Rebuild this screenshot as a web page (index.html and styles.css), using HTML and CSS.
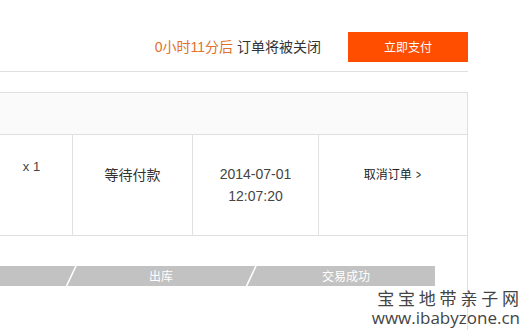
FILE: index.html
```html
<!DOCTYPE html>
<html lang="zh-CN">
<head>
<meta charset="utf-8">
<title>订单详情</title>
<link rel="stylesheet" href="styles.css">
</head>
<body>
<div class="page">
  <div class="topbar">
    <div class="timer"><span class="countdown">0小时11分后</span> 订单将被关闭</div>
    <a class="pay-btn">立即支付</a>
  </div>
  <div class="box">
    <div class="box-head"></div>
    <div class="row">
      <div class="cell cell-qty">x 1</div>
      <div class="cell cell-status">等待付款</div>
      <div class="cell cell-time">2014-07-01<br>12:07:20</div>
      <div class="cell cell-op">取消订单 <span class="arrow">&gt;</span></div>
    </div>
    <div class="progress">
      <div class="step step-first"></div>
      <svg class="sep" width="12" height="20" viewBox="0 0 12 20"><line x1="11" y1="0" x2="1.5" y2="20" stroke="#fff" stroke-width="1.6"/></svg>
      <div class="step step-mid">出库</div>
      <svg class="sep" width="12" height="20" viewBox="0 0 12 20"><line x1="11" y1="0" x2="1.5" y2="20" stroke="#fff" stroke-width="1.6"/></svg>
      <div class="step step-last">交易成功</div>
    </div>
  </div>
  <div class="watermark">
    <div class="wm-cn">宝宝地带亲子网</div>
    <div class="wm-url">www.ibabyzone.cn</div>
  </div>
</div>
</body>
</html>
```
FILE: styles.css
```css
html, body {
  margin: 0;
  padding: 0;
  background: #fff;
}
body {
  font-family: "Liberation Sans", "Noto Sans CJK SC", sans-serif;
  color: #333;
  width: 528px;
  height: 330px;
  overflow: hidden;
}
.page {
  width: 528px;
  height: 330px;
  position: relative;
  overflow: hidden;
}
.topbar {
  width: 468px;
  display: flex;
  justify-content: flex-end;
  align-items: center;
  gap: 27px;
  padding: 32px 0 9px;
  border-bottom: 1px solid #e0e0e0;
}
.timer {
  font-size: 14px;
  line-height: 20px;
  color: #333;
  font-family: "Liberation Sans", "Noto Sans CJK SC", sans-serif;
}
.countdown {
  color: #e2702c;
}
.pay-btn {
  display: block;
  width: 120px;
  height: 30px;
  line-height: 30px;
  text-align: center;
  background: #ff4e00;
  color: #fff;
  font-size: 12px;
  font-family: "Noto Sans CJK SC", sans-serif;
}
.box {
  margin-top: 20px;
  width: 468px;
  box-sizing: border-box;
  border-top: 1px solid #e0e0e0;
  border-right: 1px solid #e0e0e0;
  height: 238px;
}
.box-head {
  height: 41px;
  background: #fafafa;
  border-bottom: 1px solid #e0e0e0;
}
.row {
  display: flex;
  height: 100px;
  border-bottom: 1px solid #e0e0e0;
}
.cell {
  box-sizing: border-box;
  text-align: center;
  border-right: 1px solid #e0e0e0;
  line-height: 22px;
  font-size: 14px;
  color: #333;
}
.cell-qty {
  width: 73px;
  font-size: 13px;
  padding-top: 21px;
  padding-right: 9px;
  color: #444;
}
.cell-status {
  width: 120px;
  padding-top: 28px;
  font-family: "Noto Sans CJK SC", sans-serif;
}
.cell-time {
  width: 126px;
  padding-top: 28px;
  color: #444;
}
.cell-op {
  flex: 1;
  border-right: none;
  font-size: 12px;
  padding-top: 28px;
  font-family: "Noto Sans CJK SC", sans-serif;
  color: #222;
}
.arrow {
  font-family: "Liberation Sans", sans-serif;
  display: inline-block;
  transform: scaleX(0.7);
  margin-left: 1px;
}
.progress {
  margin-top: 30px;
  margin-left: -150px;
  width: 585px;
  height: 20px;
  background: #c2c2c2;
  display: flex;
}
.step {
  height: 20px;
  line-height: 20px;
  font-size: 12px;
  color: #fff;
  text-align: center;
  font-family: "Noto Sans CJK SC", sans-serif;
}
.step-first { width: 215px; }
.step-mid { width: 168px; }
.step-last { flex: 1; }
.sep {
  display: block;
  flex: none;
}
.watermark {
  position: absolute;
  right: 8px;
  top: 288px;
  color: #444;
  text-align: right;
}
.wm-cn {
  font-family: "Noto Sans CJK SC", sans-serif;
  font-size: 17px;
  line-height: 20px;
  letter-spacing: 3.8px;
  margin-right: -2.8px;
}
.wm-url {
  font-family: "Open Sans", sans-serif;
  font-size: 17px;
  line-height: 20px;
}
```
